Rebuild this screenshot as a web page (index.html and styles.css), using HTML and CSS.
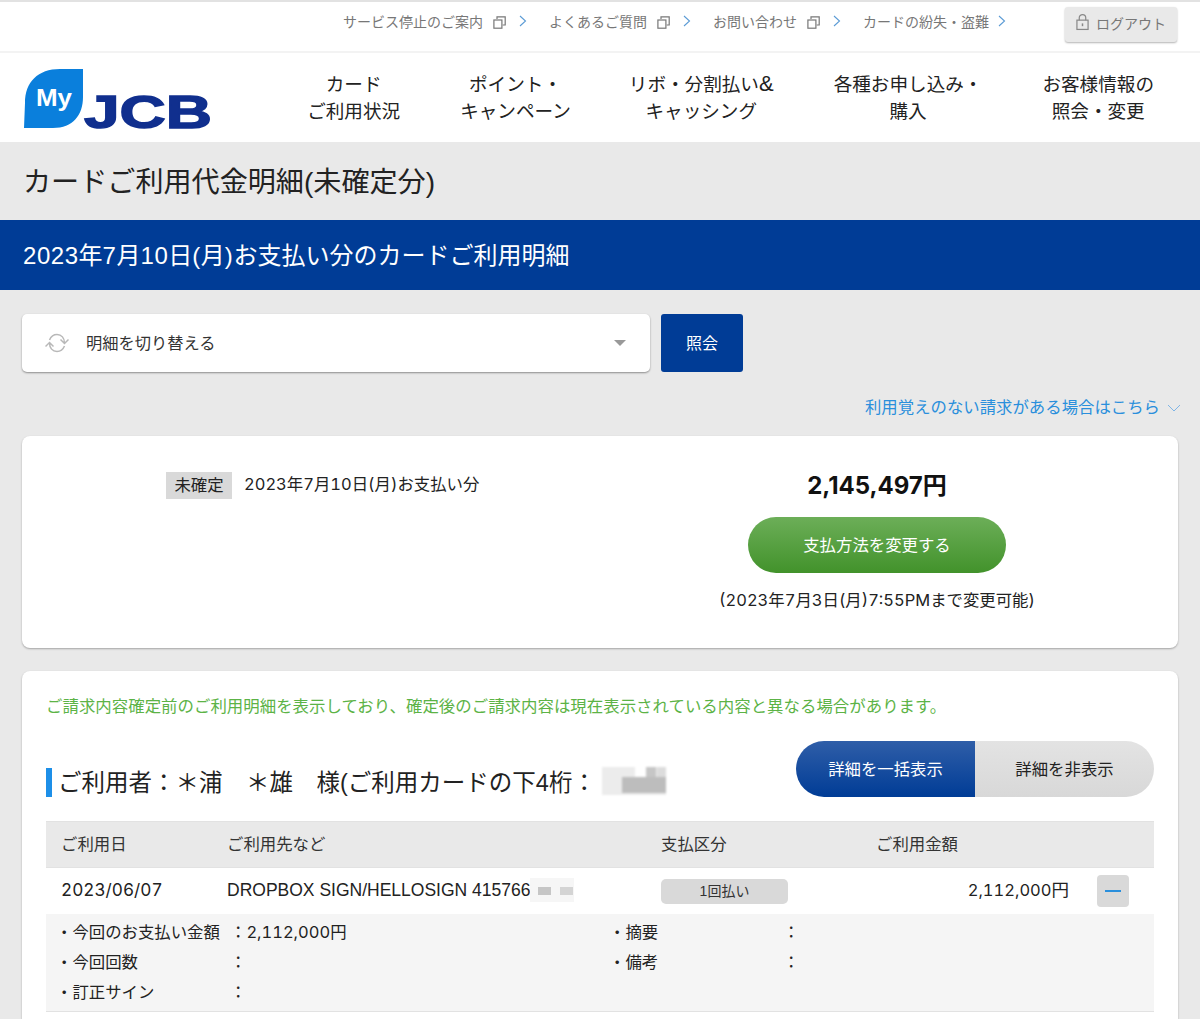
FILE: index.html
```html
<!DOCTYPE html>
<html lang="ja">
<head>
<meta charset="utf-8">
<title>カードご利用代金明細</title>
<link rel="stylesheet" href="styles.css">
</head>
<body>
<svg class="defs" width="0" height="0" aria-hidden="true">
  <symbol id="ext" viewBox="0 0 13 13"><path d="M4 3V.8h8.2V9H9.6" fill="none" stroke="#777" stroke-width="1.2"/><rect x=".9" y="4" width="8" height="8.2" fill="none" stroke="#777" stroke-width="1.2"/></symbol>
  <symbol id="chev" viewBox="0 0 8 12"><path d="M1 1l5.5 5L1 11" fill="none" stroke="#5b9bd5" stroke-width="1.1"/></symbol>
</svg>
<div class="topbar">
  <a class="toplink">サービス停止のご案内<svg class="ext"><use href="#ext"/></svg><svg class="chev"><use href="#chev"/></svg></a>
  <a class="toplink">よくあるご質問<svg class="ext"><use href="#ext"/></svg><svg class="chev"><use href="#chev"/></svg></a>
  <a class="toplink">お問い合わせ<svg class="ext"><use href="#ext"/></svg><svg class="chev"><use href="#chev"/></svg></a>
  <a class="toplink plain">カードの紛失・盗難<svg class="chev"><use href="#chev"/></svg></a>
  <button class="logout">
    <svg class="lock" viewBox="0 0 14 18"><path d="M3.500 7V4.500a3.500 3.500 0 0 1 7 0V7" fill="none" stroke="#888" stroke-width="1.3"/><rect x="1" y="7" width="12" height="10" fill="none" stroke="#888" stroke-width="1.3"/><path d="M7 10.500v3" stroke="#888" stroke-width="1.6"/></svg>
    ログアウト
  </button>
</div>
<header class="header">
  <svg class="logo" viewBox="0 0 190 68">
    <path d="M59 0H36C14 0 1 13 1 34L0 59h29C49 59 59 46 59 28Z" fill="#0a7fdc"/>
    <text x="12" y="37" class="logo-my" textLength="36" lengthAdjust="spacingAndGlyphs">My</text>
    <text x="60" y="59" class="logo-jcb" textLength="128" lengthAdjust="spacingAndGlyphs">JCB</text>
  </svg>
  <nav class="nav">
    <a>カード<br>ご利用状況</a>
    <a>ポイント・<br>キャンペーン</a>
    <a class="nav-wide">リボ・分割払い<span class="amp">&amp;</span><br>キャッシング</a>
    <a>各種お申し込み・<br>購入</a>
    <a>お客様情報の<br>照会・変更</a>
  </nav>
</header>
<h1 class="title">カードご利用代金明細(未確定分)</h1>
<h2 class="band"><span class="w">2023</span>年<span class="w">7</span>月<span class="w">10</span>日<span class="w">(</span>月<span class="w">)</span>お支払い分のカードご利用明細</h2>
<main class="main">
  <div class="selector">
    <div class="select">
      <svg class="swap" viewBox="0 0 24 22"><path d="M4.500 8C6 4.500 9 2.500 12 2.500c4.500 0 7.500 3.500 7.500 8.500M15.500 7.500l4 4 4-4" fill="none" stroke="#b8b8b8" stroke-width="1.5"/><path d="M19.500 14c-1.500 3.500-4.500 5.500-7.500 5.500-4.500 0-7.500-3.500-7.500-8.500M.5 14.500l4-4 4 4" fill="none" stroke="#b8b8b8" stroke-width="1.5"/></svg>
      <span class="select-text">明細を切り替える</span>
      <span class="caret"></span>
    </div>
    <button class="query">照会</button>
  </div>
  <div class="notice-row">
    <a class="notice">利用覚えのない請求がある場合はこちら<svg class="down" viewBox="0 0 14 8"><path d="M1 1l6 6 6-6" fill="none" stroke="#7fb5e6" stroke-width="1"/></svg></a>
  </div>
  <section class="card summary">
    <div class="sum-left">
      <span class="badge">未確定</span>
      <span class="sum-date"><span class="n">2023</span>年<span class="n">7</span>月<span class="n">10</span>日<span class="n">(</span>月<span class="n">)</span>お支払い分</span>
    </div>
    <div class="sum-right">
      <div class="amount"><span class="n">2,145,497</span>円</div>
      <button class="pay">支払方法を変更する</button>
      <div class="deadline"><span class="n">(2023</span>年<span class="n">7</span>月<span class="n">3</span>日<span class="n">(</span>月<span class="n">)7:55PM</span>まで変更可能<span class="n">)</span></div>
    </div>
  </section>
  <section class="card detail">
    <p class="warn">ご請求内容確定前のご利用明細を表示しており、確定後のご請求内容は現在表示されている内容と異なる場合があります。</p>
    <div class="user-row">
      <h3 class="user">ご利用者：＊浦　＊雄　様(ご利用カードの下4桁：<span class="mosaic card-mosaic"></span></h3>
      <div class="toggle">
        <button class="t-on">詳細を一括表示</button>
        <button class="t-off">詳細を非表示</button>
      </div>
    </div>
    <div class="table">
      <div class="thead">
        <span>ご利用日</span><span>ご利用先など</span><span>支払区分</span><span>ご利用金額</span>
      </div>
      <div class="trow">
        <span class="n date">2023/06/07</span>
        <span class="shop">DROPBOX SIGN/HELLOSIGN 415766<span class="mosaic shop-mosaic"></span></span>
        <span class="pill">1回払い</span>
        <span class="yen"><span class="n">2,112,000</span>円</span>
        <button class="minus"></button>
      </div>
      <div class="extra">
        <span>・今回のお支払い金額</span><span>：<span class="n">2,112,000</span>円</span><span>・摘要</span><span>：</span>
        <span>・今回回数</span><span>：</span><span>・備考</span><span>：</span>
        <span>・訂正サイン</span><span>：</span>
      </div>
    </div>
  </section>
</main>
</body>
</html>
```
FILE: styles.css
```css
* { box-sizing: border-box; }
html, body { margin: 0; height: 1019px; overflow: hidden; }
body { background: #e9e9e9; color: #222; font-family: "Liberation Sans", "Noto Sans CJK JP", sans-serif; }
button { font-family: inherit; border: 0; padding: 0; }
.defs { position: absolute; }
.n { font-family: "Inter", "Liberation Sans", sans-serif; font-size: 16.5px; font-variant-numeric: tabular-nums; line-height: 1; }
.w { letter-spacing: .55px; }

.topbar { height: 53px; background: #fff; border-top: 2px solid #e2e2e2; border-bottom: 2px solid #f3f3f3; display: flex; align-items: flex-start; padding-left: 343px; }
.toplink { display: flex; align-items: center; font-size: 14px; color: #777; height: 24px; margin-top: 7px; margin-right: 22px; white-space: nowrap; }
.toplink.plain { margin-right: 59px; }
.ext { width: 13px; height: 13px; margin-left: 10px; margin-top: 3px; }
.chev { width: 8px; height: 12px; margin-left: 13px; margin-top: -1px; }
.plain .chev { margin-left: 9px; }
.logout { width: 112px; height: 35px; margin-top: 5px; padding-bottom: 3px; background: #e9e9e9; border-radius: 3px; color: #777; font-size: 14px; display: flex; align-items: center; justify-content: center; gap: 7px; box-shadow: 0 1px 2px rgba(0,0,0,.3); }
.lock { width: 13px; height: 18px; margin-top: -3px; }

.header { height: 89px; background: #fff; display: flex; align-items: flex-start; padding: 16px 46px 0 24px; }
.logo { width: 190px; height: 68px; flex: none; }
.logo-my { font: 700 24px "Liberation Sans", sans-serif; fill: #fff; }
.logo-jcb { font: 700 46px "Liberation Sans", sans-serif; fill: #102f8e; stroke: #102f8e; stroke-width: 1.4px; }
.nav { margin-left: auto; display: flex; gap: 60px; margin-top: 2px; }
.nav a { font-size: 18.6px; line-height: 27px; text-align: center; color: #222; white-space: nowrap; }
.nav .nav-wide { margin-left: -2px; }
.amp { font-size: 22px; line-height: 1; }

.title { margin: 0; height: 78px; padding: 2px 0 0 23px; font-size: 28.1px; font-weight: 400; line-height: 78px; color: #222; overflow: hidden; }
.band { margin: 0; height: 70px; padding: 1px 0 0 23px; background: #003c96; color: #fff; font-size: 24px; font-weight: 400; line-height: 70px; overflow: hidden; }

.main { padding: 24px 22px 0; }
.selector { display: flex; gap: 11px; }
.select { width: 628px; height: 58px; background: #fff; border-radius: 5px; box-shadow: 0 1px 2px rgba(0,0,0,.4); display: flex; align-items: center; padding-left: 23px; }
.swap { width: 24px; height: 22px; }
.select-text { font-size: 16.25px; margin-left: 17px; margin-top: -2px; color: #333; }
.caret { margin-left: auto; margin-right: 24px; border: 6px solid transparent; border-top: 6px solid #999; border-bottom: 0; }
.query { width: 82px; height: 58px; padding-bottom: 3px; background: #003c96; color: #fff; font-size: 16px; border-radius: 3px; }

.notice-row { display: flex; justify-content: flex-end; height: 64px; padding-top: 4px; align-items: center; }
.notice { font-size: 16.4px; color: #2a8fdc; display: flex; align-items: center; margin-right: -3px; }
.down { width: 14px; height: 8px; margin-left: 7px; margin-top: 3px; }

.card { background: #fff; border-radius: 8px; box-shadow: 0 1px 2px rgba(0,0,0,.3); }
.summary { height: 212px; display: flex; margin-bottom: 23px; }
.sum-left { width: 697px; padding: 36px 0 0 144px; display: flex; align-items: flex-start; gap: 12px; font-size: 16.4px; }
.badge { background: #d9d9d9; width: 66px; height: 27px; line-height: 26px; text-align: center; }
.sum-date { line-height: 25px; white-space: nowrap; }
.sum-right { width: 316px; display: flex; flex-direction: column; align-items: center; padding-top: 33px; }
.amount { font-size: 24px; font-weight: 700; line-height: 34px; color: #111; }
.amount .n { font-size: 24px; font-variant-numeric: normal; }
.pay { width: 258px; height: 56px; margin-top: 14px; padding-bottom: 2px; border-radius: 28px; background: linear-gradient(#6cae58, #42922b); color: #fff; font-size: 16.4px; }
.deadline { font-size: 16.4px; line-height: 24px; margin-top: 15px; white-space: nowrap; }

.detail { border-radius: 8px 8px 0 0; padding: 0 24px; height: 348px; }
.warn { margin: 0; padding-top: 23px; font-size: 16.45px; line-height: 24px; color: #5cb346; white-space: nowrap; }
.user-row { display: flex; justify-content: space-between; align-items: flex-start; margin-top: 23px; height: 80px; }
.user { margin: 27px 0 0; border-left: 6px solid #1d8fe8; padding: 1px 0 0 6px; font-size: 23.5px; font-weight: 400; line-height: 29px; height: 29px; color: #222; display: flex; white-space: pre; }
.mosaic { display: inline-block; background-repeat: no-repeat; }
.card-mosaic { width: 64px; height: 28px; margin-left: 6px; margin-top: -2px; background-color: #ececec;
  background-image: linear-gradient(#fff, #fff), linear-gradient(#bdbdbd, #bdbdbd), linear-gradient(#c6c6c6, #c6c6c6), linear-gradient(#dcdcdc, #dcdcdc);
  background-size: 11px 10px, 44px 16px, 10px 10px, 9px 10px;
  background-position: 33px 0, 20px 10px, 44px 0, 55px 0; filter: blur(.8px); }
.toggle { display: flex; width: 358px; height: 56px; }
.toggle button { height: 56px; padding-bottom: 3px; font-size: 16.4px; }
.t-on { width: 179px; border-radius: 28px 0 0 28px; background: linear-gradient(#2f5ea8, #003c96); color: #fff; }
.t-off { width: 179px; border-radius: 0 28px 28px 0; background: linear-gradient(#e3e3e3, #d8d8d8); color: #222; }

.table { font-size: 16.4px; margin-right: 0; }
.thead, .trow { display: grid; grid-template-columns: 166px 434px 215px 193px 1fr; align-items: center; padding-left: 15px; }
.thead { height: 47px; padding-bottom: 3px; background: #e9e9e9; border-bottom: 1px solid #e2e2e2; border-top: 1px solid #e2e2e2; color: #333; }
.trow { height: 46px; background: #fff; font-size: 17.5px; line-height: 24px; }
.trow > span:not(.pill) { margin-top: -2px; }
.trow .date { font-size: 17.2px; line-height: 24px; }
.shop { display: flex; align-items: center; }
.shop-mosaic { width: 44px; height: 24px; background-color: #f6f6f6;
  background-image: linear-gradient(#c6c6c6, #c6c6c6), linear-gradient(#d4d4d4, #d4d4d4);
  background-size: 13px 8px, 13px 8px; background-position: 8px 9px, 30px 9px; filter: blur(.5px); }
.pill { width: 127px; height: 25px; line-height: 25px; text-align: center; background: #d9d9d9; border-radius: 5px; font-size: 14px; color: #333; }
.yen { text-align: right; }
.minus { width: 32px; height: 32px; margin-left: 28px; background: #d9d9d9; border-radius: 4px; position: relative; }
.minus::before { content: ""; position: absolute; left: 8px; right: 8px; top: 15px; height: 2px; background: #2a8fdc; }
.extra { background: #f5f5f5; height: 98px; padding: 2px 0 0 10px; border-bottom: 1px solid #e2e2e2; display: grid; grid-template-columns: 174px 379px 174px 1fr; grid-auto-rows: 30px; align-items: center; font-size: 16.4px; }
```
